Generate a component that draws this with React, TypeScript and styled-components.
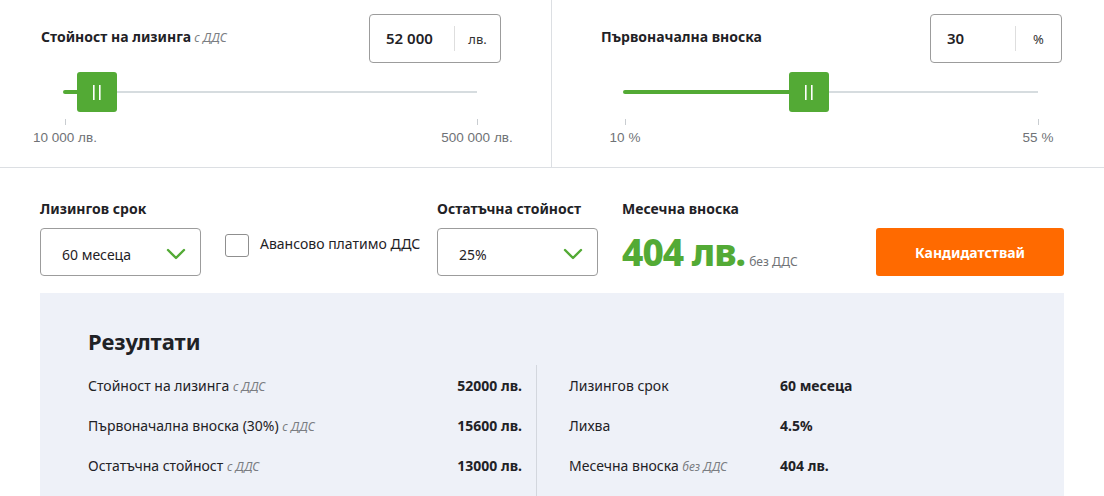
import React from "react";
import styled, { createGlobalStyle } from "styled-components";

const FONT = `"Noto Sans", "Open Sans", sans-serif`;
const GREEN = "#53aa35";

const GlobalStyle = createGlobalStyle`
  * { box-sizing: border-box; }
  body {
    margin: 0;
    background: #fff;
    font-family: ${FONT};
    color: #1f2226;
  }
`;

interface SliderProps {
  label: string;
  hint?: string;
  value: number;
  display: string;
  unit: string;
  min: number;
  max: number;
  minLabel: string;
  maxLabel: string;
  pad: [number, number];
}

const Slider = ({ label, hint, value, display, unit, min, max, minLabel, maxLabel, pad }: SliderProps) => {
  const pct = ((value - min) / (max - min)) * 100;
  return (
    <Panel $padLeft={pad[0]} $padRight={pad[1]}>
      <PanelHead>
        <Label>
          {label}
          {hint && <Hint> {hint}</Hint>}
        </Label>
        <ValueBox>
          <ValueText>{display}</ValueText>
          <UnitText>{unit}</UnitText>
        </ValueBox>
      </PanelHead>
      <SliderArea>
        <Track>
          <Fill style={{ width: `calc(${pct}% + 22px)` }} />
          <Thumb style={{ left: `${pct}%` }}>
            <svg width="10" height="15" viewBox="0 0 10 15">
              <rect x="1" y="0" width="1.6" height="15" fill="#fff" />
              <rect x="7" y="0" width="1.6" height="15" fill="#fff" />
            </svg>
          </Thumb>
        </Track>
        <Scale>
          <Tick>
            <TickMark />
            <TickLabel>{minLabel}</TickLabel>
          </Tick>
          <Tick>
            <TickMark />
            <TickLabel>{maxLabel}</TickLabel>
          </Tick>
        </Scale>
      </SliderArea>
    </Panel>
  );
};

const Chevron = () => (
  <svg width="20" height="12" viewBox="0 0 20 12">
    <polyline points="2,2 10,10 18,2" fill="none" stroke={GREEN} strokeWidth="2.4" strokeLinecap="round" strokeLinejoin="round" />
  </svg>
);

const leftRows = [
  { label: "Стойност на лизинга", hint: "с ДДС", value: "52000 лв." },
  { label: "Първоначална вноска (30%)", hint: "с ДДС", value: "15600 лв." },
  { label: "Остатъчна стойност", hint: "с ДДС", value: "13000 лв." },
];

const rightRows = [
  { label: "Лизингов срок", value: "60 месеца" },
  { label: "Лихва", value: "4.5%" },
  { label: "Месечна вноска", hint: "без ДДС", value: "404 лв." },
];

const App = () => {
  return (
    <Page>
      <GlobalStyle />
      <SliderSection>
        <Slider
          label="Стойност на лизинга"
          hint="с ДДС"
          value={48000}
          display="52 000"
          unit="лв."
          min={10000}
          max={500000}
          minLabel="10 000 лв."
          maxLabel="500 000 лв."
          pad={[41, 50]}
        />
        <Slider
          label="Първоначална вноска"
          value={30}
          display="30"
          unit="%"
          min={10}
          max={55}
          minLabel="10 %"
          maxLabel="55 %"
          pad={[49, 42]}
        />
      </SliderSection>

      <Controls>
        <Field>
          <Label>Лизингов срок</Label>
          <Select>
            <span>60 месеца</span>
            <Chevron />
          </Select>
        </Field>
        <CheckField>
          <CheckBox />
          <CheckLabel>Авансово платимо ДДС</CheckLabel>
        </CheckField>
        <Field>
          <Label>Остатъчна стойност</Label>
          <Select>
            <span>25%</span>
            <Chevron />
          </Select>
        </Field>
        <Field>
          <Label>Месечна вноска</Label>
          <Monthly>
            <Amount>404 лв.</Amount>
            <AmountNote>без ДДС</AmountNote>
          </Monthly>
        </Field>
        <ApplyButton>Кандидатствай</ApplyButton>
      </Controls>

      <Results>
        <ResultsTitle>Резултати</ResultsTitle>
        <ResultsGrid>
          <ResultsColumn>
            {leftRows.map(r => (
              <ResultRow key={r.label}>
                <RowLabel>
                  {r.label} <Hint>{r.hint}</Hint>
                </RowLabel>
                <RowValue>{r.value}</RowValue>
              </ResultRow>
            ))}
          </ResultsColumn>
          <ResultsColumn $divided>
            {rightRows.map(r => (
              <ResultRow key={r.label} $fixed>
                <RowLabel>
                  {r.label} {r.hint && <Hint>{r.hint}</Hint>}
                </RowLabel>
                <RowValue>{r.value}</RowValue>
              </ResultRow>
            ))}
          </ResultsColumn>
        </ResultsGrid>
      </Results>
    </Page>
  );
};

export default App;

const Page = styled.div`
  width: 1104px;
  height: 496px;
  overflow: hidden;
`;

const SliderSection = styled.div`
  display: grid;
  grid-template-columns: 551px 1fr;
  height: 168px;
  border-bottom: 1px solid #dcdfe3;
`;

const Panel = styled.div<{ $padLeft: number; $padRight: number }>`
  padding: 14px ${p => p.$padRight}px 0 ${p => p.$padLeft}px;
  & + & {
    border-left: 1px solid #dcdfe3;
  }
`;

const PanelHead = styled.div`
  display: flex;
  justify-content: space-between;
  align-items: flex-start;
`;

const Label = styled.div`
  font-size: 14px;
  font-weight: 700;
  line-height: 20px;
  color: #1f2226;
  padding-top: 13px;
`;

const Hint = styled.span`
  font-size: 12px;
  font-weight: 400;
  font-style: italic;
  color: #7a7d82;
`;

const ValueBox = styled.div`
  width: 132px;
  height: 49px;
  border: 1px solid #9c9c9c;
  border-radius: 4px;
  display: flex;
  align-items: center;
`;

const ValueText = styled.div`
  flex: 1;
  padding-left: 16px;
  font-size: 15px;
  font-weight: 600;
  border-right: 1px solid #dedede;
  line-height: 25px;
`;

const UnitText = styled.div`
  width: 45px;
  text-align: center;
  font-size: 13px;
  color: #333;
`;

const SliderArea = styled.div`
  padding: 0 24px;
  margin-top: 9px;
`;

const Track = styled.div`
  position: relative;
  height: 40px;
  display: flex;
  align-items: center;
  &::before {
    content: "";
    position: absolute;
    left: 0;
    right: 0;
    top: 19px;
    height: 2px;
    background: #d6dcdf;
  }
`;

const Fill = styled.div`
  position: relative;
  height: 4px;
  border-radius: 2px;
  background: ${GREEN};
  margin-left: -2px;
`;

const Thumb = styled.div`
  position: absolute;
  top: 0;
  width: 40px;
  height: 40px;
  margin-left: -20px;
  background: ${GREEN};
  border-radius: 3px;
  display: flex;
  align-items: center;
  justify-content: center;
`;

const Scale = styled.div`
  display: flex;
  justify-content: space-between;
  margin-top: 7px;
`;

const Tick = styled.div`
  width: 0;
  display: flex;
  flex-direction: column;
  align-items: center;
`;

const TickMark = styled.div`
  width: 1px;
  height: 6px;
  background: #c9cdd1;
`;

const TickLabel = styled.div`
  margin-top: 5px;
  white-space: nowrap;
  font-family: "Liberation Sans", Arial, sans-serif;
  font-size: 13.5px;
  line-height: 16px;
  color: #6f7276;
`;

const Controls = styled.div`
  display: grid;
  grid-template-columns: 161px 188px 161px 230px 188px;
  column-gap: 24px;
  padding: 31px 0 0 40px;
  align-items: end;
`;

const Field = styled.div`
  display: flex;
  flex-direction: column;
  gap: 9px;

  & > ${Label} {
    padding-top: 0;
  }
`;

const Select = styled.div`
  height: 48px;
  border: 1px solid #9c9c9c;
  border-radius: 4px;
  display: flex;
  align-items: center;
  justify-content: space-between;
  padding: 4px 14px 0 21px;
  font-size: 14px;
  color: #1f2226;
`;

const CheckField = styled.div`
  display: flex;
  align-items: flex-start;
  gap: 11px;
  height: 48px;
  padding-top: 6px;
`;

const CheckBox = styled.div`
  flex: none;
  width: 24px;
  height: 23px;
  border: 1px solid #8f8f8f;
  border-radius: 3px;
  background: #fff;
`;

const CheckLabel = styled.div`
  font-size: 14px;
  line-height: 20px;
  color: #1f2226;
  white-space: nowrap;
`;

const Monthly = styled.div`
  height: 48px;
  display: flex;
  align-items: baseline;
  gap: 4px;
`;

const Amount = styled.div`
  font-size: 37px;
  font-weight: 800;
  color: ${GREEN};
  letter-spacing: -1px;
  line-height: 48px;
`;

const AmountNote = styled.div`
  font-size: 12px;
  color: #6f7276;
`;

const ApplyButton = styled.button`
  height: 48px;
  border: none;
  border-radius: 3px;
  background: #ff6a00;
  color: #fff;
  font-family: ${FONT};
  font-size: 14px;
  font-weight: 700;
  cursor: pointer;
`;

const Results = styled.div`
  margin: 17px 40px 0;
  background: #eef1f8;
  padding: 30px 0 0 48px;
  height: 240px;
`;

const ResultsTitle = styled.h2`
  margin: 0;
  font-size: 22px;
  font-weight: 700;
  line-height: 36px;
  color: #1f2226;
`;

const ResultsGrid = styled.div`
  display: grid;
  grid-template-columns: 448px 1fr;
  margin-top: 6px;
`;

const ResultsColumn = styled.div<{ $divided?: boolean }>`
  padding-right: ${p => (p.$divided ? "0" : "14px")};
  padding-left: ${p => (p.$divided ? "32px" : "0")};
  padding-bottom: 40px;
  border-left: ${p => (p.$divided ? "1px solid #d3d7de" : "none")};
`;

const ResultRow = styled.div<{ $fixed?: boolean }>`
  display: ${p => (p.$fixed ? "grid" : "flex")};
  grid-template-columns: 211px 1fr;
  justify-content: space-between;
  align-items: center;
  height: 40px;
`;

const RowLabel = styled.div`
  font-size: 14px;
  color: #1f2226;
`;

const RowValue = styled.div`
  font-size: 14px;
  font-weight: 700;
  color: #1f2226;
`;
